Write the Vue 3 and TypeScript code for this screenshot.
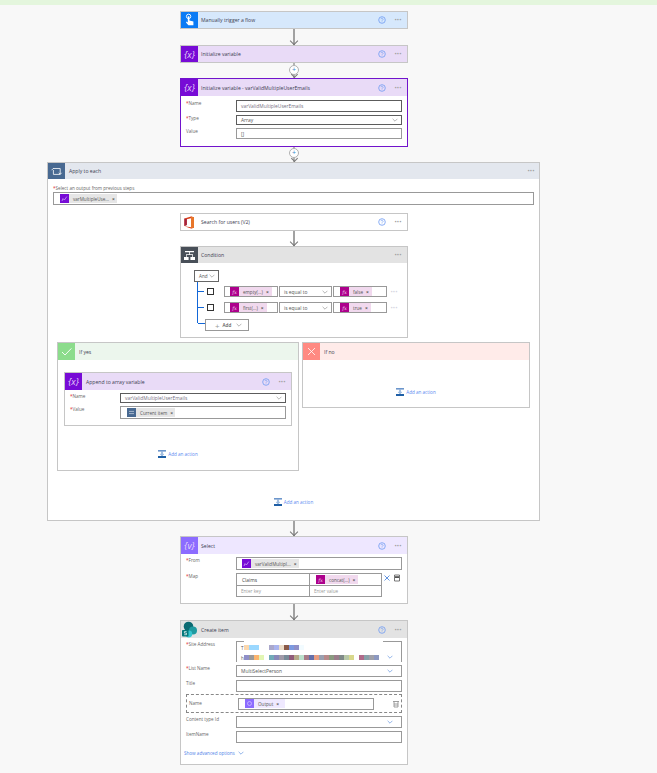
<template>
  <div class="page">
    <svg class="defs" width="0" height="0" aria-hidden="true">
      <symbol id="i-help" viewBox="0 0 10 10">
        <circle cx="5" cy="5" r="3.3" fill="none" stroke="#6f9af2" stroke-width="0.8" />
        <path d="M4 4.200a1 1 0 1 1 1.500.9L5 5.500v.5M5 6.500v.6" fill="none" stroke="#6f9af2" stroke-width="0.6" />
      </symbol>
      <symbol id="i-chev" viewBox="0 0 10 6">
        <path d="M1 1l4 4 4-4" fill="none" stroke="currentColor" stroke-width="0.9" />
      </symbol>
      <symbol id="i-action" viewBox="0 0 8 8">
        <rect x="0" y="0" width="8" height="1.600" fill="#6c96cc" />
        <rect x="3.400" y="1.600" width="1.200" height="4.400" fill="#6c96cc" />
        <rect x="2" y="3.800" width="4" height="1" fill="#9dbce0" />
        <rect x="0" y="6" width="8" height="2" fill="#1f5fa6" />
      </symbol>
    </svg>

    <div class="topbar" />
    <div class="flow">
      <section class="card card--trigger">
        <header class="head head--short">
          <span class="ico ico--trigger">
            <svg viewBox="0 0 17 17" width="17" height="17">
              <circle cx="7.600" cy="4.400" r="2.200" fill="none" stroke="#fff" stroke-width="0.900" />
              <path d="M6.800 4.200h1.600v4.200l4 1v3.800H7.400L5 10.400l.6-.8 1.200.8z" fill="#fff" />
            </svg>
          </span>
          <span class="title">Manually trigger a flow</span>
          <svg class="help"><use href="#i-help" /></svg>
          <span class="dots">···</span>
        </header>
      </section>
      <div class="arrow"><i /></div>

      <section class="card card--var">
        <header class="head head--short">
          <span class="ico ico--var">{x}</span>
          <span class="title">Initialize variable</span>
          <svg class="help"><use href="#i-help" /></svg>
          <span class="dots">···</span>
        </header>
      </section>
      <div class="plus plus--a"><b>+</b><i /></div>

      <section class="card card--var card--active">
        <header class="head">
          <span class="ico ico--var">{x}</span>
          <span class="title">Initialize variable - varValidMultipleUserEmails</span>
          <svg class="help"><use href="#i-help" /></svg>
          <span class="dots">···</span>
        </header>
        <div class="body body--init">
          <div class="row">
            <label><em>*</em>Name</label>
            <div class="field field--dark field--h12"><span class="val val--muted">varValidMultipleUserEmails</span></div>
          </div>
          <div class="row">
            <label><em>*</em>Type</label>
            <div class="field field--dark field--h10"><span class="val">Array</span><svg class="chev"><use href="#i-chev" /></svg></div>
          </div>
          <div class="row">
            <label>Value</label>
            <div class="field field--h11"><span class="val">[]</span></div>
          </div>
        </div>
      </section>
      <div class="plus plus--b"><b>+</b><i /></div>

      <section class="scope">
        <header class="scope__head">
          <span class="ico ico--loop">
            <svg viewBox="0 0 17 17" width="17" height="17">
              <path d="M5 5.500h7.200v5.400M12.200 11.400H5.400V7M3.600 7.200 5.200 5.500M10.800 9.800l1.400 1.600 1.400-1.600" fill="none" stroke="#fff" stroke-width="0.800" />
            </svg>
          </span>
          <span class="title title--wide">Apply to each</span>
          <span class="dots dots--scope">···</span>
        </header>
        <div class="scope__label"><em>*</em>Select an output from previous steps</div>
        <div class="field field--scope">
          <span class="chip chip--grey"><span class="chip__i chip__i--var">
            <svg viewBox="0 0 9 9" width="9" height="9"><path d="M2 7l1-2.400L4.400 6l2.400-3.400" fill="none" stroke="#e6d4fa" stroke-width="0.600" /></svg>
          </span>varMultipleUse...<u>×</u></span>
        </div>

        <div class="inner">
          <section class="card card--plain">
            <header class="head head--short">
              <span class="ico ico--white">
                <svg viewBox="0 0 17 17" width="17" height="17">
                  <path d="M3.400 4.600 10 2.400l3 .9v10.400l-3 .9-6.600-2.300 6.600.9V4.200l-4.200 1v5.800l-2.400 1z" fill="#d8401c" />
                  <path d="M10 2.400l3 .9v10.400l-3 .9z" fill="#e8762a" />
                  <path d="M3.400 4.600 5.800 5.200v5.800l-2.400 1z" fill="#a3223f" />
                </svg>
              </span>
              <span class="title">Search for users (V2)</span>
              <svg class="help"><use href="#i-help" /></svg>
              <span class="dots">···</span>
            </header>
          </section>
          <div class="arrow arrow--15"><i /></div>

          <section class="card card--grey">
            <header class="head head--short">
              <span class="ico ico--cond">
                <svg viewBox="0 0 17 17" width="17" height="17">
                  <path d="M4 4h9v1.200H4zM8.200 5.200h.8v2h-.8zM5 7.200h7v.8H5zM5 8h.7v2H5zM11.300 8h.7v2h-.7z" fill="#fff" />
                  <rect x="3" y="10" width="4.600" height="3" fill="#fff" />
                  <rect x="9.400" y="10" width="4.600" height="3" fill="#fff" />
                </svg>
              </span>
              <span class="title">Condition</span>
              <span class="dots">···</span>
            </header>
            <div class="cond">
              <div class="andbox">And<svg class="chev chev--and"><use href="#i-chev" /></svg></div>
              <div class="tree">
                <div v-for="r in conditionRows" :key="r.left" class="tree__row">
                  <span class="check" />
                  <div class="field field--cell field--w54">
                    <span class="chip chip--fx"><span class="chip__i chip__i--fx">fx</span>{{ r.left }}<u>×</u></span>
                  </div>
                  <div class="field field--cell field--w53 op"><span class="val">is equal to</span><svg class="chev"><use href="#i-chev" /></svg></div>
                  <div class="field field--cell field--w54 field--right">
                    <span class="chip chip--fx"><span class="chip__i chip__i--fx">fx</span>{{ r.right }}<u>×</u></span>
                  </div>
                  <span class="dots dots--row">···</span>
                </div>
                <div class="tree__row tree__row--add">
                  <div class="addbtn"><span class="addbtn__plus">+</span>Add<svg class="chev chev--add"><use href="#i-chev" /></svg></div>
                </div>
              </div>
            </div>
          </section>
        </div>

        <div class="branches">
          <section class="branch branch--yes">
            <header class="branch__head">
              <span class="ico ico--yes">
                <svg viewBox="0 0 17 17" width="17" height="17"><path d="M4 9l3 3 6.400-6.600" fill="none" stroke="#fff" stroke-width="0.900" /></svg>
              </span>
              <span class="title title--wide">If yes</span>
            </header>
            <div class="card card--var card--nested">
              <header class="head">
                <span class="ico ico--var">{x}</span>
                <span class="title title--wide">Append to array variable</span>
                <svg class="help"><use href="#i-help" /></svg>
                <span class="dots">···</span>
              </header>
              <div class="body body--append">
                <div class="row">
                  <label><em>*</em>Name</label>
                  <div class="field field--dark field--h10"><span class="val val--muted">varValidMultipleUserEmails</span><svg class="chev"><use href="#i-chev" /></svg></div>
                </div>
                <div class="row">
                  <label><em>*</em>Value</label>
                  <div class="field field--h13">
                    <span class="chip chip--grey chip--item"><span class="chip__i chip__i--loop">
                      <svg viewBox="0 0 9 9" width="9" height="9"><path d="M2 3.400h5M2 5.600h5" stroke="#cfd9e6" stroke-width="0.700" /></svg>
                    </span>Current item<u>×</u></span>
                  </div>
                </div>
              </div>
            </div>
            <div class="addaction addaction--yes"><svg><use href="#i-action" /></svg>Add an action</div>
          </section>

          <section class="branch branch--no">
            <header class="branch__head">
              <span class="ico ico--no">
                <svg viewBox="0 0 17 17" width="17" height="17"><path d="M5 5l7 7M12 5l-7 7" stroke="#fff" stroke-width="0.800" /></svg>
              </span>
              <span class="title title--wide">If no</span>
            </header>
            <div class="addaction addaction--no"><svg><use href="#i-action" /></svg>Add an action</div>
          </section>
        </div>
        <div class="addaction addaction--outer"><svg><use href="#i-action" /></svg>Add an action</div>
      </section>
      <div class="arrow arrow--15"><i /></div>

      <section class="card card--select">
        <header class="head">
          <span class="ico ico--select">{v}</span>
          <span class="title">Select</span>
          <svg class="help"><use href="#i-help" /></svg>
          <span class="dots">···</span>
        </header>
        <div class="body body--select">
          <div class="row">
            <label><em>*</em>From</label>
            <div class="field field--h13">
              <span class="chip chip--grey chip--from"><span class="chip__i chip__i--var">
                <svg viewBox="0 0 9 9" width="9" height="9"><path d="M2 7l1-2.400L4.400 6l2.400-3.400" fill="none" stroke="#e6d4fa" stroke-width="0.600" /></svg>
              </span>varValidMultipl...<u>×</u></span>
            </div>
          </div>
          <div class="row">
            <label><em>*</em>Map</label>
            <div class="mapwrap">
              <div class="map">
                <div class="map__cell map__cell--key">Claims</div>
                <div class="map__cell map__cell--fx"><span class="chip chip--fx"><span class="chip__i chip__i--fx">fx</span>concat(...)<u>×</u></span></div>
                <div class="map__cell map__cell--hint">Enter key</div>
                <div class="map__cell map__cell--hint">Enter value</div>
              </div>
              <svg class="mapico" viewBox="0 0 8 8" width="8" height="8"><path d="M1.500 1.500l5 5M6.500 1.500l-5 5" stroke="#3a78d8" stroke-width="0.800" /></svg>
              <svg class="mapico mapico--copy" viewBox="0 0 8 8" width="8" height="8"><path d="M1.500 1h5v6h-5z" fill="none" stroke="#555" stroke-width="0.800" /><path d="M2 2.200h4V4H2z" fill="#555" /></svg>
            </div>
          </div>
        </div>
      </section>
      <div class="arrow"><i /></div>

      <section class="card card--grey">
        <header class="head">
          <span class="ico ico--sp">
            <svg viewBox="0 0 17 19" width="17" height="19">
              <circle cx="7.500" cy="5.500" r="4.800" fill="#0b6a72" />
              <circle cx="12" cy="9.500" r="4" fill="#1f9aa0" />
              <circle cx="7.800" cy="13" r="3.400" fill="#37c6d0" />
              <rect x="1" y="9" width="6.500" height="6.500" rx="0.800" fill="#03787c" />
              <path d="M5.600 10.600H3.400v1.500h2.100v1.600H3.200" fill="none" stroke="#fff" stroke-width="0.700" />
            </svg>
          </span>
          <span class="title">Create item</span>
          <svg class="help"><use href="#i-help" /></svg>
          <span class="dots">···</span>
        </header>
        <div class="body body--create">
          <div class="row">
            <label><em>*</em>Site Address</label>
            <div class="field field--site">
              <div v-for="(line, i) in redacted" :key="i" class="redact">
                <span class="redact__c">{{ i === 0 ? 'T' : 'h' }}</span>
                <span v-for="(b, j) in line" :key="j" class="redact__b" :style="{ width: b.w + 'px', background: b.c }" />
              </div>
              <span class="site__gap" />
              <svg class="chev chev--blue"><use href="#i-chev" /></svg>
            </div>
          </div>
          <div class="row">
            <label><em>*</em>List Name</label>
            <div class="field field--h12"><span class="val">MultiSelectPerson</span><svg class="chev chev--blue"><use href="#i-chev" /></svg></div>
          </div>
          <div class="row">
            <label>Title</label>
            <div class="field field--h12" />
          </div>
          <div class="dashed">
            <label>Name</label>
            <div class="field field--h12 field--name">
              <span class="chip chip--output"><span class="chip__i chip__i--select">
                <svg viewBox="0 0 9 9" width="9" height="9"><circle cx="4.500" cy="4.500" r="2" fill="none" stroke="#e0d6ff" stroke-width="0.600" /></svg>
              </span>Output<u>×</u></span>
            </div>
            <svg class="trash" viewBox="0 0 8 8" width="8" height="8"><path d="M1 1.500h6M2 1.500V7h4V1.500M3 3v3M5 3v3" fill="none" stroke="#888" stroke-width="0.800" /></svg>
          </div>
          <div class="row">
            <label>Content type Id</label>
            <div class="field field--h12"><svg class="chev chev--blue"><use href="#i-chev" /></svg></div>
          </div>
          <div class="row">
            <label>ItemName</label>
            <div class="field field--h12" />
          </div>
          <div class="advanced">Show advanced options<svg class="chev--adv"><use href="#i-chev" /></svg></div>
        </div>
      </section>
    </div>
  </div>
</template>

<script setup lang="ts">
interface Block { w: number; c: string }

const conditionRows = [
  { left: 'empty(...)', right: 'false' },
  { left: 'first(...)', right: 'true' }
];

const block = (w: number, c: string): Block => ({ w, c });

// blurred out site address in the original
const redacted: Block[][] = [
  [
    block(5, '#fbd7ad'), block(10, '#9bd8ff'), block(10, '#fff'), block(5, '#aaa8cc'), block(5, '#aab4ee'),
    block(5, '#ecdcc8'), block(5, '#8a5a48'), block(5, '#7c9ae0'), block(5, '#8f8fc8'), block(5, '#f2fbff')
  ],
  [
    block(5, '#8f8fc8'), block(5, '#9a9a9a'), block(5, '#fbb46e'), block(5, '#e2f6b4'), block(5, '#fff'),
    block(5, '#72aab8'), block(5, '#8888b8'), block(5, '#a09aa8'), block(5, '#788a98'), block(5, '#905c7a'),
    block(5, '#b4a888'), block(5, '#bce0cc'), block(5, '#a87c88'), block(5, '#6470aa'), block(5, '#e89c80'),
    block(5, '#9aa0b0'), block(5, '#b88a8a'), block(5, '#8a9a80'), block(5, '#9a7c8a'), block(5, '#808a88'),
    block(5, '#b8c8a8'), block(5, '#d8d88c'), block(5, '#fff'), block(5, '#b06a8a'), block(5, '#88a0a8'),
    block(5, '#a0a0a8'), block(5, '#8c98c0')
  ]
];
</script>

<style>
html,
body {
  margin: 0;
  background: #f8f8f8;
}
</style>

<style scoped>
.page {
  position: relative;
  width: 657px;
  height: 773px;
  overflow: hidden;
  background: #f8f8f8;
  font-family: "Open Sans", "Liberation Sans", sans-serif;
  font-size: 4.6px;
  color: #555;
}
.defs {
  position: absolute;
}
.topbar {
  height: 5px;
  background: #e4f6dd;
}
.flow {
  width: 493px;
  margin: 6px 0 0 47px;
  display: flex;
  flex-direction: column;
  align-items: flex-start;
}

/* cards */
.card {
  width: 228px;
  margin-left: 133px;
  box-sizing: border-box;
  border: 1px solid #c6c6c6;
  background: #fff;
}
.head {
  height: 17px;
  display: flex;
  align-items: center;
}
.head--short { height: 16px; }
.card--trigger .head { background: #d6e8fc; }
.card--var .head { background: #e9dbf7; }
.card--select .head { background: #eee7ff; }
.card--grey .head { background: #e3e3e3; }
.card--active {
  border-color: #7113cc;
}
.ico {
  flex: none;
  width: 17px;
  height: 100%;
  display: flex;
  align-items: center;
  justify-content: center;
  color: #e7d5fa;
  font-size: 9px;
  font-family: "Open Sans", sans-serif;
  font-style: italic;
}
.ico--trigger { background: #0b7bf5; }
.ico--var { background: #770bd6; }
.ico--select { background: #8c6cff; }
.ico--loop { background: #486991; }
.ico--cond { background: #484f58; }
.ico--white { background: #fff; }
.ico--yes { background: #8cdc8c; }
.ico--no { background: #ff8a82; }
.ico--sp {
  position: relative;
  top: 1px;
  height: 19px;
}
.title {
  margin-left: 3px;
  flex: 1;
  font-size: 5.100px;
  color: #3d3d52;
}
.title--wide {
  margin-left: 4px;
}
.help {
  width: 10px;
  height: 10px;
  margin-right: 4px;
}
.dots {
  width: 14px;
  margin-right: 2px;
  color: #a0a0a0;
  font-size: 8px;
  line-height: 1;
  text-align: center;
  font-weight: 700;
}
.dots--scope {
  margin-right: 1px;
}
.dots--row {
  flex: none;
  width: 10px;
  margin-left: 1px;
  color: #d4d4e0;
}

/* connectors */
.arrow {
  position: relative;
  width: 2px;
  height: 16px;
  margin-left: 246px;
  background: #a2a2a2;
}
.arrow--15 { height: 15px; }
.arrow i,
.plus i {
  position: absolute;
  left: -2px;
  bottom: 1px;
  width: 6px;
  height: 6px;
  box-sizing: border-box;
  border-right: 1px solid #777;
  border-bottom: 1px solid #777;
  transform: rotate(45deg);
}
.plus {
  position: relative;
  width: 2px;
  height: 15px;
  margin-left: 246px;
  background: #b4b4b4;
}
.plus b {
  position: absolute;
  top: 2px;
  left: -4px;
  width: 10px;
  height: 10px;
  box-sizing: border-box;
  border: 1px solid #b0b0b0;
  border-radius: 50%;
  background: #fff;
  color: #3a8ecc;
  font-size: 7px;
  line-height: 7px;
  text-align: center;
  font-weight: 400;
}
.plus--b b { top: 1px; }
.plus i {
  width: 5px;
  height: 5px;
  left: -1.500px;
}

/* form rows */
.body {
  display: flex;
  flex-direction: column;
  gap: 3px;
}
.body--init { padding: 4px 5px 7px; }
.body--append { padding: 3px 5px 6px; }
.body--select { padding: 3px 5px 6px; }
.body--create { padding: 3px 5px 8px; }
.row {
  display: grid;
  grid-template-columns: 50px 166px;
  align-items: start;
}
label {
  line-height: 7px;
  color: #666;
}
em {
  color: #d22;
  font-style: normal;
}
.field {
  position: relative;
  box-sizing: border-box;
  display: flex;
  align-items: center;
  padding-left: 4px;
  border: 1px solid #999;
  background: #fff;
  color: #555;
}
.field--dark { border-color: #5c5c5c; }
.field--h10 { height: 10px; }
.field--h11 { height: 11px; }
.field--h12 { height: 12px; }
.field--h13 { height: 13px; }
.val { font-size: 4.900px; }
.val--muted { color: #77707f; }
.chev {
  position: absolute;
  top: 3px;
  right: 3px;
  width: 6px;
  height: 4px;
  color: #777;
}
.field--h10 .chev { top: 2px; }
.chev--blue {
  right: 8px;
  color: #3a78d8;
}

/* pills */
.chip {
  display: inline-flex;
  align-items: center;
  height: 9px;
  padding-right: 2px;
  white-space: nowrap;
}
.chip u {
  margin-left: 3px;
  text-decoration: none;
  font-weight: 700;
  font-size: 5px;
  color: #555;
}
.chip__i {
  display: flex;
  align-items: center;
  justify-content: center;
  width: 9px;
  height: 9px;
  margin-right: 4px;
  flex: none;
}
.chip__i--var { background: #770bd6; }
.chip__i--loop { background: #486991; }
.chip__i--select { background: #8c6cff; }
.chip__i--fx {
  background: #ad008c;
  color: #f3d8ee;
  font-family: "DejaVu Serif", serif;
  font-style: italic;
  font-size: 5px;
}
.chip--grey { background: #e6e6e6; }
.chip--fx {
  background: #f1d9ee;
  padding-right: 3px;
}
.chip--output { background: #efe9ff; padding-right: 6px; }
.chip--from { margin-left: 1px; }
.chip--item { margin-left: 2px; }

/* apply to each */
.scope {
  width: 493px;
  height: 359px;
  box-sizing: border-box;
  border: 1px solid #c6c6c6;
  background: #fff;
}
.scope__head {
  height: 16px;
  display: flex;
  align-items: center;
  background: #e3e7ee;
}
.scope__label {
  margin: 6px 0 0 5px;
  color: #666;
  line-height: 7px;
}
.field--scope {
  width: 481px;
  height: 13px;
  margin: 0 0 0 5px;
  padding-left: 6px;
}
.inner {
  margin: 8px 0 0 -1px;
  display: flex;
  flex-direction: column;
}
.cond {
  height: 74px;
  padding: 7px 0 0 13px;
  box-sizing: border-box;
}
.andbox {
  position: relative;
  box-sizing: border-box;
  width: 25px;
  height: 12px;
  padding: 2px 0 0 4px;
  border: 1px solid #666;
}
.chev--and {
  top: 3px;
  right: 3px;
}
.tree {
  margin-left: 3px;
  padding-top: 4px;
  border-left: 1px solid #1267d8;
  height: 41px;
  box-sizing: border-box;
  display: flex;
  flex-direction: column;
  gap: 5px;
}
.tree__row {
  position: relative;
  display: flex;
  align-items: center;
  height: 11px;
  padding-left: 26px;
  gap: 1px;
}
.tree__row::before {
  content: "";
  position: absolute;
  left: 0;
  top: 5px;
  width: 6px;
  height: 1px;
  background: #1267d8;
}
.check {
  position: absolute;
  left: 9px;
  top: 2px;
  width: 7px;
  height: 7px;
  box-sizing: border-box;
  border: 1px solid #333;
}
.field--cell { height: 11px; flex: none; }
.field--w54 { width: 54px; padding-left: 5px; }
.field--w53 { width: 53px; padding-left: 4px; }
.field--right { padding-left: 6px; }
.tree__row--add {
  padding-left: 7px;
  margin-top: 1px;
  height: 12px;
}
.tree__row--add::before {
  top: 4px;
  width: 7px;
}
.addbtn {
  position: relative;
  display: flex;
  align-items: center;
  box-sizing: border-box;
  width: 44px;
  height: 12px;
  padding-left: 9px;
  border: 1px solid #999;
  font-weight: 600;
}
.addbtn__plus {
  margin-right: 3px;
  color: #999;
  font-size: 8px;
  font-weight: 400;
}
.chev--add { top: 3px; right: 6px; }

/* branches */
.branches {
  display: flex;
  align-items: flex-start;
  gap: 3px;
  margin: 4px 0 0 9px;
}
.branch {
  box-sizing: border-box;
  border: 1px solid #c6c6c6;
  background: #fff;
}
.branch--yes { width: 242px; height: 129px; }
.branch--no { width: 228px; height: 66px; }
.branch__head {
  height: 17px;
  display: flex;
  align-items: center;
}
.branch--yes .branch__head { background: #ecf6ed; }
.branch--no .branch__head { background: #ffebe9; }
.card--nested {
  margin: 12px 0 0 6px;
}
.addaction {
  display: flex;
  align-items: center;
  justify-content: center;
  gap: 2px;
  color: #5a8af0;
}
.addaction svg {
  width: 8px;
  height: 8px;
}
.addaction--yes { margin-top: 24px; }
.addaction--no { margin-top: 28px; }
.addaction--outer { margin-top: 27px; }

/* select */
.mapwrap {
  display: flex;
  align-items: flex-start;
  gap: 1px;
}
.map {
  width: 146px;
  height: 24px;
  flex: none;
  display: grid;
  grid-template-columns: 73px 71px;
  grid-template-rows: 12px 10px;
  box-sizing: border-box;
  border: 1px solid #999;
}
.map__cell {
  box-sizing: border-box;
  display: flex;
  align-items: center;
  padding-left: 5px;
  border-right: 1px solid #999;
  border-bottom: 1px solid #999;
}
.map__cell:nth-child(even) { border-right: 0; }
.map__cell:nth-child(n + 3) { border-bottom: 0; }
.map__cell--key { font-size: 4.900px; color: #444; }
.map__cell--fx { padding-left: 6px; }
.map__cell--hint { color: #999; padding-left: 4px; }
.mapico { flex: none; margin-top: 1px; }
.mapico--copy { margin-left: 1px; }

/* create item */
.field--site {
  display: block;
  height: 21px;
  padding: 2px 0 0 4px;
  border-bottom: 0;
}
.redact {
  height: 7px;
  display: flex;
  align-items: center;
}
.redact + .redact { margin-top: 3px; }
.redact__c { width: 3px; }
.redact__b {
  height: 5px;
  flex: none;
}
/* the redaction in the original cuts through the top border */
.site__gap {
  position: absolute;
  top: -1px;
  left: 7px;
  width: 139px;
  height: 1px;
  background: #fff;
}
.field--site .chev {
  top: 13px;
}
.dashed {
  display: flex;
  align-items: center;
  box-sizing: border-box;
  width: 216px;
  height: 19px;
  margin-top: -1px;
  border: 1px dashed #888;
}
.dashed label {
  width: 51px;
  padding: 0 0 0 2px;
  box-sizing: border-box;
  flex: none;
}
.field--name {
  width: 136px;
  padding-left: 6px;
}
.trash {
  margin-left: 18px;
}
.advanced {
  display: flex;
  align-items: center;
  gap: 3px;
  height: 6px;
  margin: 4px 0 0 -2px;
  color: #4f83e8;
}
.chev--adv {
  width: 6px;
  height: 4px;
  color: #3a78d8;
}
</style>
